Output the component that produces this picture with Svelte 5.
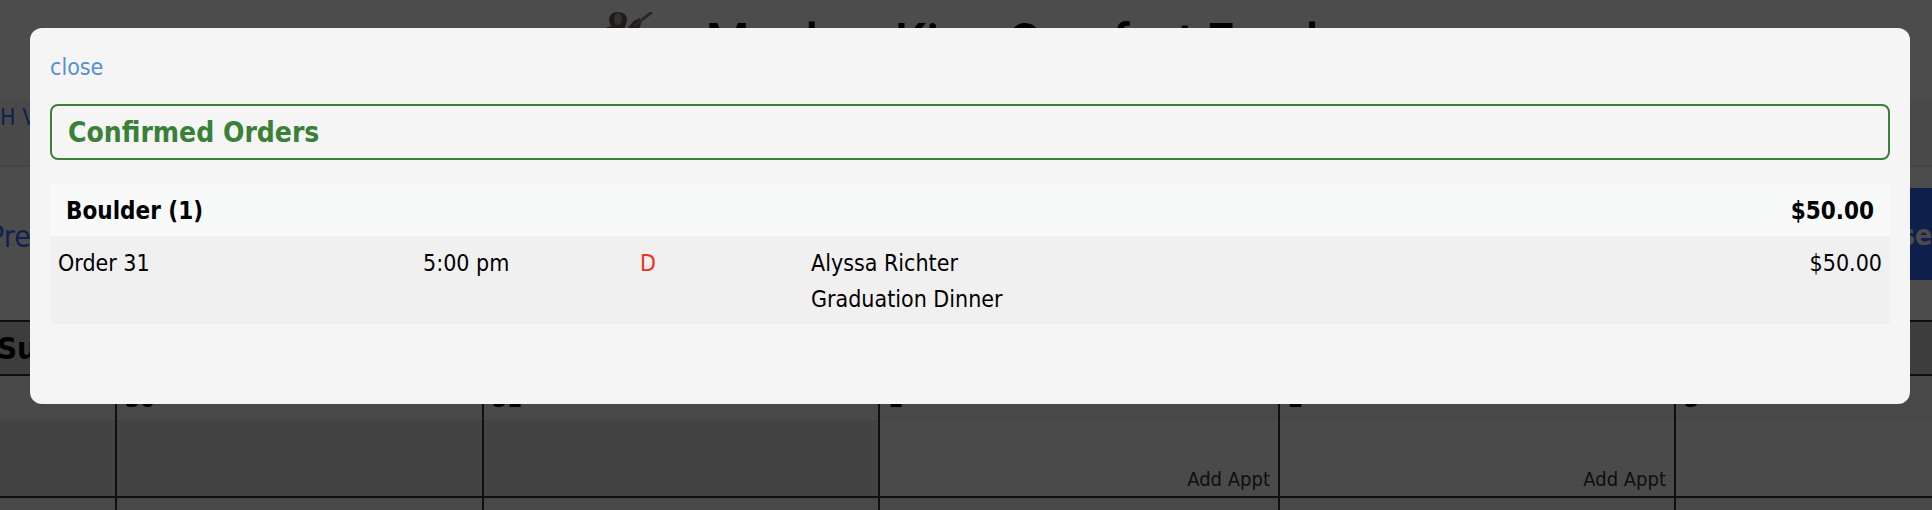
<script lang="ts">
	interface Order {
		id: number;
		time: string;
		type: string;
		customer: string;
		title: string;
		total: string;
	}

	const orders: Order[] = [
		{ id: 31, time: '5:00 pm', type: 'D', customer: 'Alyssa Richter', title: 'Graduation Dinner', total: '$50.00' }
	];

	const days = [
		{ name: 'Su', date: '', past: true, canAdd: false },
		{ name: '', date: '30', past: true, canAdd: false },
		{ name: '', date: '31', past: true, canAdd: false },
		{ name: '', date: '1', past: false, canAdd: true },
		{ name: '', date: '2', past: false, canAdd: true },
		{ name: '', date: '3', past: false, canAdd: false }
	];

	let isOpen = $state(true);

	function close(e: MouseEvent) {
		e.preventDefault();
		isOpen = false;
	}
</script>

<div class="page">
	<header class="brand">
		<svg class="logo" viewBox="0 0 60 64" aria-hidden="true">
			<path d="M12 12C9 4 14 0 20 0s11 4 8 12l-3 8h-9z" fill="#6f5d50" />
			<ellipse cx="20" cy="7" rx="4" ry="6" fill="#b3a598" />
			<path d="M4 24c0-8 7-12 12-8l10 4 10-11 6-3 1 6-7 16v30H12z" fill="#6b5a4d" />
			<path d="M36 14 54 0" stroke="#8a8a8a" stroke-width="3" />
		</svg>
		<h1>Monkey King Comfort Food</h1>
	</header>
	<nav class="nav">
		<a href="#view">H V</a>
	</nav>
	<div class="toolbar">
		<a href="#prev">Pre</a>
		<button class="search">se</button>
	</div>
	<table class="calendar">
		<colgroup>
			<col class="sun" />
			<col class="mon" />
			<col class="tue" />
			<col class="wed" />
			<col class="thu" />
			<col class="fri" />
		</colgroup>
		<thead>
			<tr>
				{#each days as day}
					<th>{day.name}</th>
				{/each}
			</tr>
		</thead>
		<tbody>
			<tr>
				{#each days as day}
					<td class:past={day.past}>
						<div class="date">{day.date}</div>
						<div class="slot">
							{#if day.canAdd}
								<a href="#add">Add Appt</a>
							{/if}
						</div>
					</td>
				{/each}
			</tr>
			<tr>
				{#each days as day}
					<td><div class="date"></div></td>
				{/each}
			</tr>
		</tbody>
	</table>
</div>

{#if isOpen}
	<div class="overlay">
		<div class="modal" role="dialog" aria-modal="true" aria-labelledby="modal-title">
			<a class="close" href="#close" onclick={close}>close</a>
			<h2 id="modal-title">Confirmed Orders</h2>
			<div class="location">
				<span>Boulder ({orders.length})</span>
				<span>$50.00</span>
			</div>
			<table class="orders">
				<tbody>
					{#each orders as order}
						<tr>
							<td class="id">Order {order.id}</td>
							<td class="time">{order.time}</td>
							<td class="type">{order.type}</td>
							<td>{order.customer}<br />{order.title}</td>
							<td class="total">{order.total}</td>
						</tr>
					{/each}
				</tbody>
			</table>
		</div>
	</div>
{/if}

<style>
	:global(body) {
		background: #fff;
		overflow: hidden;
	}

	.page,
	.overlay {
		font-family: Tahoma, 'DejaVu Sans Condensed', 'DejaVu Sans', sans-serif;
		font-size: 23px;
		line-height: 36px;
		color: #000;
	}

	.page {
		height: 100vh;
		overflow: hidden;
	}

	a {
		color: #3370ff;
		text-decoration: none;
	}

	.brand {
		display: flex;
		justify-content: center;
		gap: 48px;
		height: 88px;
		padding: 12px 16px 0 0;
		box-sizing: border-box;
	}

	.logo {
		width: 60px;
		height: 64px;
	}

	h1 {
		margin: 0;
		font-family: Roboto, sans-serif;
		font-size: 50px;
		font-weight: 500;
		line-height: 60px;
	}

	.nav {
		height: 67px;
		margin-top: 12px;
		border-bottom: 2px solid #e4e4e4;
		background: #f4f5f5;
		box-sizing: border-box;
		line-height: 34px;
	}

	.toolbar {
		display: flex;
		justify-content: space-between;
		align-items: flex-start;
		height: 153px;
		padding-top: 21px;
		box-sizing: border-box;
		font-size: 30px;
	}

	.toolbar a {
		margin-left: -12px;
		padding-top: 31px;
	}

	.search {
		width: 60px;
		height: 92px;
		padding: 4px 0 0;
		border: 0;
		background: #3568ff;
		color: #fff;
		font: inherit;
		font-size: 28px;
		font-weight: bold;
		text-align: right;
	}

	.calendar {
		width: 100%;
		table-layout: fixed;
		border-collapse: collapse;
	}

	.calendar .sun {
		width: 6%;
	}

	.calendar .mon {
		width: 19%;
	}

	.calendar .tue,
	.calendar .thu {
		width: 20.5%;
	}

	.calendar .wed {
		width: 20.7%;
	}

	.calendar th {
		height: 52px;
		padding: 0;
		border: 2px solid #333;
		border-width: 2px 0;
		background: #ccc;
		font-size: 31px;
		text-align: left;
		text-indent: -3px;
	}

	.calendar td {
		padding: 0;
		border: 2px solid #333;
		border-top: 0;
		vertical-align: top;
	}

	.calendar td:first-child {
		border-left: 0;
	}

	.calendar td:last-child {
		border-right: 0;
	}

	.date {
		height: 44px;
		padding: 5px 8px 0;
		background: #f0f0f0;
		box-sizing: border-box;
		font-size: 24px;
		font-weight: bold;
	}

	.slot {
		display: flex;
		justify-content: flex-end;
		align-items: flex-end;
		height: 76px;
		padding-right: 8px;
		box-sizing: border-box;
		background: #f8f8f8;
		font-size: 20px;
		line-height: 34px;
	}

	.past .slot {
		background: #e0e0e0;
	}

	.slot a {
		color: #333;
	}

	.overlay {
		position: fixed;
		inset: 0;
		padding: 28px 22px 0 30px;
		background: rgba(0, 0, 0, 0.7);
	}

	.modal {
		padding: 21px 20px 80px;
		border-radius: 12px;
		background: #f5f5f5;
	}

	.close {
		display: block;
		color: #5590cf;
	}

	h2 {
		margin: 19px 0 24px;
		padding: 9px 16px 7px;
		border: 2px solid #3a8036;
		border-radius: 8px;
		color: #3a8036;
		font-size: 28px;
		line-height: 36px;
	}

	.location {
		display: flex;
		justify-content: space-between;
		padding: 9px 16px 7px;
		background: #f8faf9;
		font-size: 24px;
		font-weight: bold;
	}

	.orders {
		width: 100%;
		table-layout: fixed;
		border-collapse: collapse;
		background: #f0f0f0;
	}

	.orders td {
		padding: 9px 8px 7px;
		vertical-align: top;
	}

	.orders .id {
		width: 349px;
	}

	.orders .time {
		width: 201px;
	}

	.orders .type {
		width: 155px;
		color: #f03020;
	}

	.orders .total {
		width: 200px;
		text-align: right;
	}
</style>
